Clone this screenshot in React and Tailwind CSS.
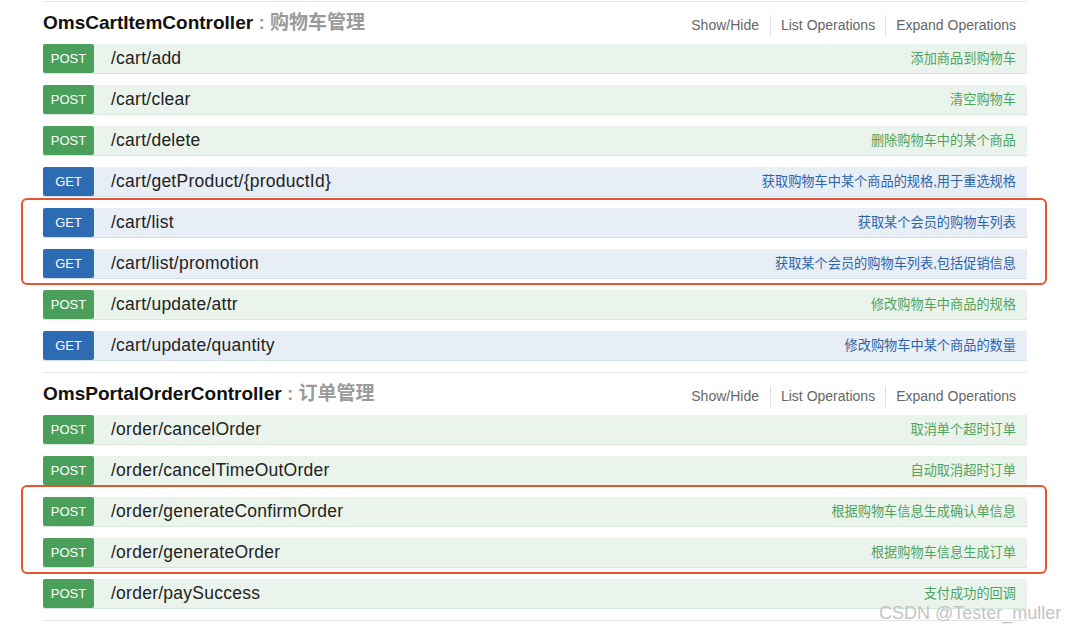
const sections = [
  {
    name: "OmsCartItemController",
    desc: "购物车管理",
    ops: [
      { method: "POST", path: "/cart/add", summary: "添加商品到购物车" },
      { method: "POST", path: "/cart/clear", summary: "清空购物车" },
      { method: "POST", path: "/cart/delete", summary: "删除购物车中的某个商品" },
      { method: "GET", path: "/cart/getProduct/{productId}", summary: "获取购物车中某个商品的规格,用于重选规格" },
      { method: "GET", path: "/cart/list", summary: "获取某个会员的购物车列表" },
      { method: "GET", path: "/cart/list/promotion", summary: "获取某个会员的购物车列表,包括促销信息" },
      { method: "POST", path: "/cart/update/attr", summary: "修改购物车中商品的规格" },
      { method: "GET", path: "/cart/update/quantity", summary: "修改购物车中某个商品的数量" },
    ],
  },
  {
    name: "OmsPortalOrderController",
    desc: "订单管理",
    ops: [
      { method: "POST", path: "/order/cancelOrder", summary: "取消单个超时订单" },
      { method: "POST", path: "/order/cancelTimeOutOrder", summary: "自动取消超时订单" },
      { method: "POST", path: "/order/generateConfirmOrder", summary: "根据购物车信息生成确认单信息" },
      { method: "POST", path: "/order/generateOrder", summary: "根据购物车信息生成订单" },
      { method: "POST", path: "/order/paySuccess", summary: "支付成功的回调" },
    ],
  },
];

const font = { fontFamily: '"Liberation Sans", "Noto Sans CJK SC", sans-serif' };

const OpRow = ({ method, path, summary }) => {
  const isGet = method === "GET";
  return (
    <li
      className={`flex items-center h-[30px] mb-[11px] border-b ${
        isGet ? "bg-[#e8eef6] border-[#d3deec]" : "bg-[#eaf4ec] border-[#d5e8d9]"
      }`}
    >
      <span
        className={`w-[51px] h-[29px] flex items-center justify-center rounded-[2px] text-[13px] text-white ${
          isGet ? "bg-[#2d6bb2]" : "bg-[#4a9f5b]"
        }`}
      >
        {method}
      </span>
      <span className="pl-[17px] text-[17.5px] tracking-[0.25px] text-[#222]">{path}</span>
      <span className={`ml-auto pr-[11px] text-[13.2px] ${isGet ? "text-[#2c64a8]" : "text-[#4fa35f]"}`}>
        {summary}
      </span>
    </li>
  );
};

const Section = ({ name, desc, ops }) => (
  <section className="border-t border-[#e6e6e6]">
    <div className="flex items-center h-[42px]">
      <h2 className="text-[19px] font-bold text-[#111]">
        {name}
        <span className="text-[#9a9a9a]"> : {desc}</span>
      </h2>
      <ul className="ml-auto pr-[11px] pt-[5px] flex items-center text-[14px] text-[#666]">
        <li className="pr-[11px]">Show/Hide</li>
        <li className="px-[10px] border-l border-[#e0e0e0]">List Operations</li>
        <li className="pl-[10px] border-l border-[#e0e0e0]">Expand Operations</li>
      </ul>
    </div>
    <ul>
      {ops.map((op) => (
        <OpRow key={op.path} {...op} />
      ))}
    </ul>
  </section>
);

export default function App() {
  return (
    <div className="relative w-[1080px] h-[631px] bg-white overflow-hidden" style={font}>
      <div className="pt-[1px] pl-[43px] w-[1027px]">
        {sections.map((s) => (
          <Section key={s.name} {...s} />
        ))}
        <div className="border-t border-[#e6e6e6]" />
      </div>

      {/* annotation boxes */}
      <div className="absolute left-[21px] top-[198px] w-[1026px] h-[87px] border-2 border-[#e4562e] rounded-[6px]" />
      <div className="absolute left-[21px] top-[485px] w-[1026px] h-[89px] border-2 border-[#e4562e] rounded-[6px]" />

      <div className="absolute left-[879px] top-[604px] text-[18px] text-[#c4c4c4] leading-none">
        CSDN @Tester_muller
      </div>
    </div>
  );
}
